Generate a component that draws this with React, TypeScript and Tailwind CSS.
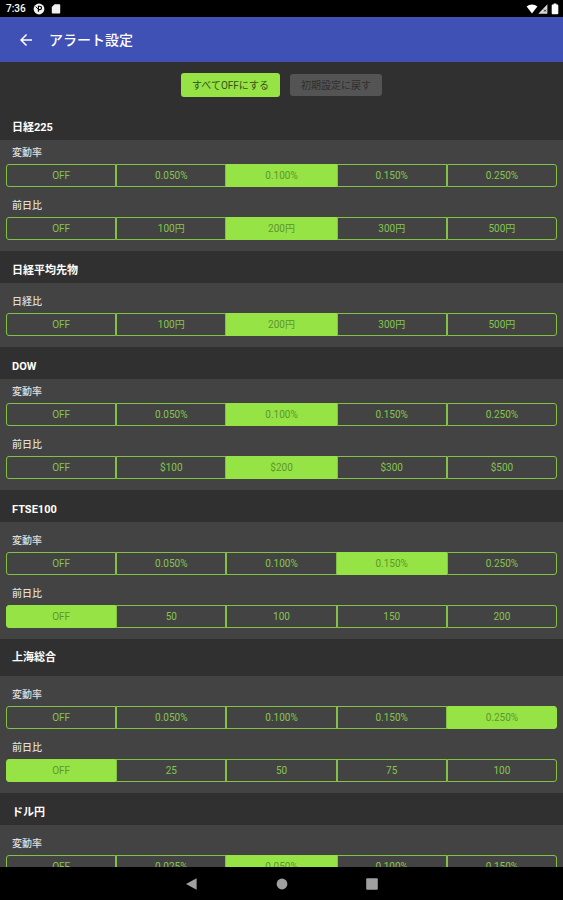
import React, { useState } from "react";
import clsx from "clsx";

type Row = {
	label: string;
	options: string[];
	selected: number;
};

type Section = {
	title: string;
	rows: Row[];
	dense?: boolean;
	tall?: boolean;
};

const RATES = ["OFF", "0.050%", "0.100%", "0.150%", "0.250%"];
const YEN = ["OFF", "100円", "200円", "300円", "500円"];

const SECTIONS: Section[] = [
	{
		title: "日経225",
		dense: true,
		rows: [
			{ label: "変動率", options: RATES, selected: 2 },
			{ label: "前日比", options: YEN, selected: 2 },
		],
	},
	{
		title: "日経平均先物",
		rows: [{ label: "日経比", options: YEN, selected: 2 }],
	},
	{
		title: "DOW",
		dense: true,
		rows: [
			{ label: "変動率", options: RATES, selected: 2 },
			{
				label: "前日比",
				options: ["OFF", "$100", "$200", "$300", "$500"],
				selected: 2,
			},
		],
	},
	{
		title: "FTSE100",
		rows: [
			{ label: "変動率", options: RATES, selected: 3 },
			{
				label: "前日比",
				options: ["OFF", "50", "100", "150", "200"],
				selected: 0,
			},
		],
	},
	{
		title: "上海総合",
		tall: true,
		rows: [
			{ label: "変動率", options: RATES, selected: 4 },
			{
				label: "前日比",
				options: ["OFF", "25", "50", "75", "100"],
				selected: 0,
			},
		],
	},
	{
		title: "ドル円",
		rows: [
			{
				label: "変動率",
				options: ["OFF", "0.025%", "0.050%", "0.100%", "0.150%"],
				selected: 2,
			},
		],
	},
];

const initialValues = () =>
	SECTIONS.map((section) => section.rows.map((row) => row.selected));

const StatusBar = () => {
	return (
		<div className="flex h-[17px] shrink-0 items-center bg-black pr-1 pl-1.5 text-white">
			<span className="text-[10px] leading-4 font-medium">7:36</span>
			<svg viewBox="0 0 12 12" className="ml-[7px] h-3 w-3" aria-hidden="true">
				<circle cx="6" cy="6" r="5.4" fill="#f1f1f1" />
				<path
					d="M5.4 8.8V3.2h1.4a1.7 1.7 0 0 1 0 3.4H5.4"
					fill="none"
					stroke="#000"
					strokeWidth="1.1"
				/>
				<path d="M2.6 3.6 5 6" stroke="#000" strokeWidth="0.9" />
			</svg>
			<svg viewBox="0 0 10 12" className="ml-1.5 h-3 w-2.5" aria-hidden="true">
				<path
					d="M3.6 1.2h4.6c.6 0 1 .4 1 1v7.4c0 .6-.4 1-1 1H1.8c-.6 0-1-.4-1-1V4z"
					fill="#f1f1f1"
				/>
			</svg>
			<svg viewBox="0 0 12 12" className="ml-auto h-3 w-3" aria-hidden="true">
				<path d="M.6 3.6C3.6.8 8.4.8 11.4 3.6L6 10.6z" fill="#fff" />
			</svg>
			<svg viewBox="0 0 10 12" className="h-3 w-2.5" aria-hidden="true">
				<path d="M.3 10.8 9.4 1.2v9.6z" fill="#d8d8d8" />
				<path d="m6 6.6 2 2m0-2-2 2" stroke="#222" strokeWidth="0.9" />
			</svg>
			<svg viewBox="0 0 8 12" className="ml-[3px] h-3 w-2" aria-hidden="true">
				<path
					d="M2.6.6h2.8v1h1c.5 0 .9.4.9.9v7.8c0 .5-.4.9-.9.9H1.6a.9.9 0 0 1-.9-.9V2.5c0-.5.4-.9.9-.9h1z"
					fill="#fff"
				/>
			</svg>
		</div>
	);
};

const AppBar = () => {
	return (
		<header className="flex h-[45px] shrink-0 items-center gap-3.5 bg-[#3f51b5] px-[17px] text-white">
			<button type="button" aria-label="戻る">
				<svg viewBox="0 0 24 24" className="h-[18px] w-[18px] fill-white">
					<path d="M20 11H7.83l5.59-5.59L12 4l-8 8 8 8 1.41-1.41L7.83 13H20z" />
				</svg>
			</button>
			<h1 className="text-sm font-medium">アラート設定</h1>
		</header>
	);
};

type SegmentedProps = {
	id: string;
	row: Row;
	value: number;
	onChange: (value: number) => void;
};

const Segmented = ({ id, row, value, onChange }: SegmentedProps) => {
	return (
		<div role="radiogroup" aria-labelledby={id}>
			<p id={id} className="mb-0.5 px-1.5 text-[10px] leading-[18px] font-medium text-[#dedede]">
				{row.label}
			</p>
			<div className="flex">
				{row.options.map((option, i) => (
					<label
						key={option}
						className={clsx(
							"relative flex h-[23px] flex-1 cursor-pointer items-center justify-center border text-[10px]",
							"first:rounded-l-[3px] last:rounded-r-[3px]",
							i === value
								? "border-[#95e345] bg-[#95e345] text-[#5f962e]"
								: "border-[#80c146] text-[#86c64c]"
						)}
					>
						<input
							type="radio"
							name={id}
							className="sr-only"
							checked={i === value}
							onChange={() => onChange(i)}
						/>
						{option}
					</label>
				))}
			</div>
		</div>
	);
};

const NavBar = () => {
	return (
		<nav className="flex h-[33px] shrink-0 items-center justify-center gap-[74px] bg-black">
			<button type="button" aria-label="戻る">
				<svg viewBox="0 0 16 16" className="h-4 w-4 fill-[#a0a0a0]">
					<path d="M12.6 2.2v11.6L2 8z" />
				</svg>
			</button>
			<button type="button" aria-label="ホーム">
				<svg viewBox="0 0 16 16" className="h-4 w-4 fill-[#a0a0a0]">
					<circle cx="8" cy="8" r="5.4" />
				</svg>
			</button>
			<button type="button" aria-label="履歴">
				<svg viewBox="0 0 16 16" className="h-4 w-4 fill-[#a0a0a0]">
					<rect x="2.2" y="2.2" width="11.6" height="11.6" rx="1" />
				</svg>
			</button>
		</nav>
	);
};

const App = () => {
	const [values, setValues] = useState(initialValues);

	const update = (s: number, r: number, value: number) => {
		setValues((prev) =>
			prev.map((rows, i) =>
				i === s ? rows.map((v, j) => (j === r ? value : v)) : rows
			)
		);
	};

	return (
		<div className="flex h-screen flex-col bg-[#303030] font-[Roboto,'Noto_Sans_CJK_JP',sans-serif]">
			<StatusBar />
			<AppBar />
			<main className="min-h-0 flex-1 overflow-y-auto [scrollbar-width:none]">
				<div className="flex items-center justify-center gap-2.5 py-[11px] text-[10px]">
					<button
						type="button"
						className="h-6 rounded-[3px] bg-[#95e345] px-[11px] text-[#35501c]"
						onClick={() => setValues((prev) => prev.map((rows) => rows.map(() => 0)))}
					>
						すべてOFFにする
					</button>
					<button
						type="button"
						className="h-[22px] rounded-[3px] bg-[#545454] px-[11px] text-[#2e2e2e]"
						onClick={() => setValues(initialValues())}
					>
						初期設定に戻す
					</button>
				</div>
				{SECTIONS.map((section, s) => (
					<section key={section.title}>
						<h2
							className={clsx(
								"flex items-center px-3 text-[11px] font-bold text-white",
								section.tall ? "h-[37px] pt-0.5" : "h-8 pt-2"
							)}
						>
							{section.title}
						</h2>
						<div
							className={clsx(
								"flex flex-col gap-2.5 bg-[#434343] px-1.5 pb-[11px]",
								section.dense ? "pt-1" : "pt-2.5"
							)}
						>
							{section.rows.map((row, r) => (
								<Segmented
									key={row.label}
									id={`row-${s}-${r}`}
									row={row}
									value={values[s][r]}
									onChange={(value) => update(s, r, value)}
								/>
							))}
						</div>
					</section>
				))}
			</main>
			<NavBar />
		</div>
	);
};

export default App;
